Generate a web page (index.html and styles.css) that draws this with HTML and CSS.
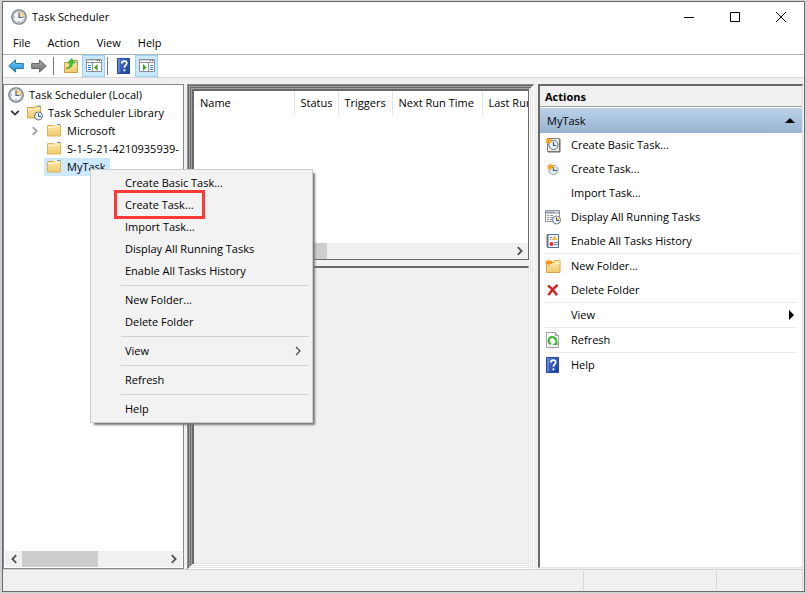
FILE: index.html
```html
<!DOCTYPE html>
<html lang="en">
<head>
<meta charset="utf-8">
<title>Task Scheduler</title>
<link rel="stylesheet" href="styles.css">
</head>
<body>
<svg class="defs" aria-hidden="true">
  <defs>
    <linearGradient id="gold" x1="0" y1="0" x2="0" y2="1"><stop offset="0" stop-color="#ffe9a6"/><stop offset="1" stop-color="#efca70"/></linearGradient>
    <linearGradient id="blue" x1="0" y1="0" x2="0" y2="1"><stop offset="0" stop-color="#7bd3fb"/><stop offset="1" stop-color="#168bd5"/></linearGradient>
    <linearGradient id="grey" x1="0" y1="0" x2="0" y2="1"><stop offset="0" stop-color="#aaa"/><stop offset="1" stop-color="#6f6f6f"/></linearGradient>
    <linearGradient id="navy" x1="0" y1="0" x2="1" y2="1"><stop offset="0" stop-color="#5279d0"/><stop offset="1" stop-color="#1c3c9e"/></linearGradient>
  </defs>
  <symbol id="clock" viewBox="0 0 16 16">
    <circle cx="8" cy="8" r="7.3" fill="#c9ccd0" stroke="#73777c" stroke-width="1.1"/>
    <circle cx="8" cy="8" r="5.7" fill="#f1f6fb" stroke="#a4a9af" stroke-width=".7"/>
    <path d="M8 8V2.4A5.6 5.6 0 0 1 13.6 8z" fill="#f6d78d"/>
    <path d="M8 3.5V8.5H11.5" fill="none" stroke="#4b6586" stroke-width="1.2"/>
    <path d="M3 8h1M8 12v1M12 8h1" stroke="#8c96a1"/>
  </symbol>
  <symbol id="folder" viewBox="0 0 16 16">
    <path d="M1.500 2.500h6l1-1h6v11.500h-13z" fill="url(#gold)" stroke="#dcb45c"/>
    <path d="M2 4.500h7l1-1h4" fill="none" stroke="#fff3c9"/>
    <path d="M8.500 1.500h3" stroke="#fff"/><path d="M11 1.500h3" stroke="#4d9ce3"/>
  </symbol>
  <symbol id="library" viewBox="0 0 16 16">
    <path d="M.5 2.500h7l1-1.500h5v12H.5z" fill="url(#gold)" stroke="#d5a647"/>
    <path d="M1 4.500h8l1-1h3" fill="none" stroke="#fff3c9"/>
    <path d="M10.500 1.500h3" stroke="#4d9ce3"/>
    <circle cx="11.500" cy="11" r="4" fill="#e7f2f8" stroke="#66717c"/>
    <path d="M11.500 8.500V11.500H14" fill="none" stroke="#345574"/>
  </symbol>
  <symbol id="back" viewBox="0 0 16 14"><path d="M.7 7 7.500 1v3.500h7.800v5H7.500V13z" fill="url(#blue)" stroke="#2a72a8"/></symbol>
  <symbol id="forward" viewBox="0 0 16 14"><path d="M15.300 7 8.500 1v3.500H.7v5h7.800V13z" fill="url(#grey)" stroke="#686868"/></symbol>
  <symbol id="up" viewBox="0 0 16 16">
    <path d="M1.500 4.500h7l1-2h5v12h-13z" fill="url(#gold)" stroke="#cf9f42"/>
    <path d="M12 4h2" stroke="#4d9ce3"/>
    <path d="M3 10C6 10 7 8 7 5H4.500L8.500.5 12 5H9.500C9.500 9 7 11 3 10z" fill="#42c32e" stroke="#2c9a25" stroke-width=".6"/>
  </symbol>
  <symbol id="panel-left" viewBox="0 0 16 14">
    <path d="M.5.5h15v12H.5z" fill="#fff" stroke="#8b9198"/><path d="M1 1.500h14" stroke="#cfd4da"/>
    <path d="M1 3.500h14" stroke="#8b9198"/><path d="M11 1.500h1M13 1.500h1" stroke="#555"/>
    <path d="M6.500 4v9" stroke="#8b9198"/><path d="M2 6.500h3M2 8.500h3M2 10.500h3" stroke="#397fbd"/>
    <path d="M11.500 5v7L8 8.500z" fill="#37a51d"/>
  </symbol>
  <symbol id="panel-right" viewBox="0 0 16 14">
    <path d="M.5.5h15v12H.5z" fill="#fff" stroke="#8b9198"/><path d="M1 1.500h14" stroke="#cfd4da"/>
    <path d="M1 3.500h14" stroke="#8b9198"/><path d="M11 1.500h1M13 1.500h1" stroke="#555"/>
    <path d="M9.500 4v9" stroke="#8b9198"/><path d="M11 6.500h3M11 8.500h3M11 10.500h3" stroke="#397fbd"/>
    <path d="M4 5v7l3.500-3.500z" fill="#37a51d"/>
  </symbol>
  <symbol id="help" viewBox="0 0 16 16">
    <path d="M1.500.5h12v15h-12z" fill="url(#navy)" stroke="#24479f"/><path d="M3 1v14" stroke="#7fa0e0"/>
    <path d="M5.800 5.500C5.800 2.200 11 2.300 10.800 5.300 10.700 7 8.400 7.200 8.400 9.700" fill="none" stroke="#fff" stroke-width="1.700"/><circle cx="8.400" cy="12.300" r="1.100" fill="#fff"/>
  </symbol>
  <symbol id="basic" viewBox="0 0 16 16">
    <path d="M2.500 1.500h12v13h-12z" fill="#ececec" stroke="#857c78"/><path d="M15 2v13H3" fill="none" stroke="#74665e"/>
    <circle cx="8.500" cy="8" r="4.600" fill="#e3f2fb" stroke="#67737e"/><path d="M8.500 5v3.500h2.800" fill="none" stroke="#355b7b" stroke-width="1.200"/>
    <path d="m3.500 0 1 2.300L7 2 5.400 4 7 6 4.500 5.500 3.500 8l-1-2.500L0 6l1.500-2L0 2l2.500.3z" fill="#f8a51d"/>
  </symbol>
  <symbol id="create" viewBox="0 0 16 16">
    <circle cx="8.500" cy="9" r="4.700" fill="#dcebf2" stroke="#a0a8ac"/><path d="M8.500 6v3.500H12" fill="none" stroke="#355b7b" stroke-width="1.200"/>
    <path d="m5.500 2 1 2.200 3-.7-1.600 2.200L9 8 6.500 7.200 5.500 9.500 4.300 7.300 2 8l1.200-2.300L2 3.700l2.500.6z" fill="#f8a01d"/>
  </symbol>
  <symbol id="running" viewBox="0 0 16 16">
    <path d="M.5 1.500h14v11H.5z" fill="#fff" stroke="#8c9298"/><path d="M1 3.500h13" stroke="#8799ab" stroke-width="2"/><path d="M10 3h3" stroke="#fff"/>
    <path d="M2 6.500h2M5 6.500h3M2 8.500h2M5 8.500h3M2 10.500h2M5 10.500h2" stroke="#8399b2"/>
    <circle cx="11.500" cy="11" r="4" fill="#e7f2f8" stroke="#737b84"/><path d="M11.500 7.500V11H15A3.500 3.500 0 0 0 11.500 7.500" fill="#f6d78d"/><path d="M11.500 8.500V11.500H14" fill="none" stroke="#345574"/>
  </symbol>
  <symbol id="history" viewBox="0 0 16 16">
    <path d="M2.500 1.500h11v13h-11z" fill="#f4f7fb" stroke="#4d71a6"/>
    <path d="M1 3h3M1 5h3M1 7h3M1 9h3M1 11h3M1 13h3" stroke="#777"/>
    <path d="M9.500 2.500 12.500 7h-6z" fill="#f2bd34"/><circle cx="6.500" cy="11" r="2" fill="#d8342c"/><path d="M5 4.500h2M5 6.500h1M9 9.500h4M9 11.500h4" stroke="#5f86ba"/>
  </symbol>
  <symbol id="new-folder" viewBox="0 0 16 16">
    <path d="M1.500 4.500h7l1-2h5.500v12H1.500z" fill="url(#gold)" stroke="#d5a647"/><path d="M11 3.500h4" stroke="#fff7cf"/><path d="M2 6.500h8l1-1h4" fill="none" stroke="#fff3c9"/>
    <path d="m4 1 1 2 3-.5L6.300 4.500 8 6.500 5 6 4 8.500 3 6 0 6.500l1.500-2L0 2.500 3 3z" fill="#f79718"/>
  </symbol>
  <symbol id="delete" viewBox="0 0 16 16"><path d="M3 3.500C6 5.500 9 9 12 13.200M12.500 3C9 5.500 6 9 3.500 13.200" fill="none" stroke="#d12222" stroke-width="2.500"/></symbol>
  <symbol id="refresh" viewBox="0 0 16 16">
    <path d="M1.500.5h9l3 3v12h-12z" fill="#fafafa" stroke="#a1a1a1"/><path d="M10.500.5v3h3" fill="#ddd" stroke="#a1a1a1"/>
    <path d="M6 12A3.600 3.600 0 1 1 10.800 9.500" fill="none" stroke="#38b52c" stroke-width="2"/><path d="M12.500 8.500v4.500H7.500z" fill="#38b52c"/>
  </symbol>
  <symbol id="chev-right" viewBox="0 0 8 10"><path d="m1.800 1.200 3.800 3.800-3.800 3.800" fill="none" stroke="currentColor" stroke-width="1.800"/></symbol>
  <symbol id="chev-thin" viewBox="0 0 8 10"><path d="m2 1 4 4-4 4" fill="none" stroke="currentColor" stroke-width="1.200"/></symbol>
  <symbol id="chev-left" viewBox="0 0 8 10"><path d="M6.200 1.200 2.400 5l3.800 3.800" fill="none" stroke="currentColor" stroke-width="1.800"/></symbol>
  <symbol id="chev-down" viewBox="0 0 10 8"><path d="m1.200 1.800 3.800 3.800 3.800-3.800" fill="none" stroke="currentColor" stroke-width="1.800"/></symbol>
</svg>

<div class="window">
  <header class="titlebar">
    <svg class="icon"><use href="#clock"/></svg>
    <h1>Task Scheduler</h1>
    <div class="controls">
      <button aria-label="Minimize"><svg viewBox="0 0 10 10"><path d="M0 5.500h10"/></svg></button>
      <button aria-label="Maximize"><svg viewBox="0 0 10 10"><path d="M.5.5h9v9h-9z"/></svg></button>
      <button aria-label="Close"><svg viewBox="0 0 10 10"><path d="m0 0 10 10M10 0 0 10"/></svg></button>
    </div>
  </header>
  <nav class="menubar">
    <button>File</button><button>Action</button><button>View</button><button>Help</button>
  </nav>
  <div class="toolbar">
    <button aria-label="Back"><svg class="arrow"><use href="#back"/></svg></button>
    <button aria-label="Forward"><svg class="arrow"><use href="#forward"/></svg></button>
    <span class="divider"></span>
    <button aria-label="Up one level"><svg class="icon"><use href="#up"/></svg></button>
    <button class="on" aria-label="Show console tree"><svg class="arrow"><use href="#panel-left"/></svg></button>
    <span class="divider tight"></span>
    <button aria-label="Help"><svg class="icon"><use href="#help"/></svg></button>
    <button class="on" aria-label="Show action pane"><svg class="arrow"><use href="#panel-right"/></svg></button>
  </div>

  <main class="panes">
    <section class="tree">
      <ul>
        <li class="root"><svg class="icon"><use href="#clock"/></svg><span>Task Scheduler (Local)</span></li>
        <li class="library"><svg class="twist open"><use href="#chev-down"/></svg><svg class="icon"><use href="#library"/></svg><span>Task Scheduler Library</span></li>
        <li class="child"><svg class="twist"><use href="#chev-right"/></svg><svg class="icon"><use href="#folder"/></svg><span>Microsoft</span></li>
        <li class="child"><i class="twist"></i><svg class="icon"><use href="#folder"/></svg><span>S-1-5-21-4210935939-</span></li>
        <li class="child"><i class="twist"></i><div class="selected"><svg class="icon"><use href="#folder"/></svg><span>MyTask</span></div></li>
      </ul>
      <div class="scrollbar">
        <button aria-label="Scroll left"><svg><use href="#chev-left"/></svg></button>
        <span class="thumb"></span>
        <button aria-label="Scroll right"><svg><use href="#chev-right"/></svg></button>
      </div>
    </section>

    <section class="results">
      <div class="list">
        <table>
          <thead><tr><th class="name">Name</th><th class="status">Status</th><th class="triggers">Triggers</th><th class="next">Next Run Time</th><th class="last">Last Run</th></tr></thead>
        </table>
        <div class="scrollbar">
          <button aria-label="Scroll left"><svg><use href="#chev-left"/></svg></button>
          <span class="thumb wide"></span>
          <button aria-label="Scroll right"><svg><use href="#chev-right"/></svg></button>
        </div>
      </div>
      <div class="details"></div>
    </section>

    <aside class="actions">
      <h2>Actions</h2>
      <button class="group">MyTask<svg viewBox="0 0 10 5"><path d="M5 0l5 5H0z"/></svg></button>
      <ul>
        <li><button><svg class="icon"><use href="#basic"/></svg>Create Basic Task...</button></li>
        <li><button><svg class="icon"><use href="#create"/></svg>Create Task...</button></li>
        <li><button><i class="icon"></i>Import Task...</button></li>
        <li><button><svg class="icon"><use href="#running"/></svg>Display All Running Tasks</button></li>
        <li><button><svg class="icon"><use href="#history"/></svg>Enable All Tasks History</button></li>
        <li class="ruled"><button><svg class="icon"><use href="#new-folder"/></svg>New Folder...</button></li>
        <li><button><svg class="icon"><use href="#delete"/></svg>Delete Folder</button></li>
        <li class="ruled"><button><i class="icon"></i>View<svg class="more" viewBox="0 0 5 10"><path d="M0 0l5 5-5 5z"/></svg></button></li>
        <li class="ruled"><button><svg class="icon"><use href="#refresh"/></svg>Refresh</button></li>
        <li class="ruled"><button><svg class="icon"><use href="#help"/></svg>Help</button></li>
      </ul>
    </aside>
  </main>
  <footer class="statusbar"><span></span><span></span><span></span></footer>
</div>

<div class="context">
  <button>Create Basic Task...</button>
  <button class="marked">Create Task...</button>
  <button>Import Task...</button>
  <button>Display All Running Tasks</button>
  <button>Enable All Tasks History</button>
  <hr>
  <button>New Folder...</button>
  <button>Delete Folder</button>
  <hr>
  <button>View<svg><use href="#chev-thin"/></svg></button>
  <hr>
  <button>Refresh</button>
  <hr>
  <button>Help</button>
</div>
</body>
</html>
```
FILE: styles.css
```css
*, *::after { box-sizing: border-box; }
body {
  margin: 0;
  height: 100vh;
  padding: 1px 2px 2px;
  background: #d2d2d2;
  color: #000;
  font: 11px/18px "Open Sans", "Noto Sans", sans-serif;
  position: relative;
  overflow: hidden;
}
button { border: 0; padding: 0; background: none; font: inherit; color: inherit; }
ul { list-style: none; margin: 0; padding: 0; }
svg { display: block; flex: none; }
.defs { position: absolute; width: 0; height: 0; }
.icon { width: 16px; height: 16px; flex: none; }

.window {
  height: 100%;
  display: flex;
  flex-direction: column;
  border: 1px solid #6b6b6b;
  background: #f0f0f0;
}
.titlebar { display: flex; align-items: center; height: 29px; padding-left: 8px; gap: 5px; background: #fff; }
h1 { margin: 0; flex: 1; font-size: 11px; font-weight: 400; }
.controls { display: flex; }
.controls button { width: 46px; height: 28px; display: flex; align-items: center; justify-content: center; }
.controls svg { width: 10px; height: 10px; fill: none; stroke: #000; }
.menubar { display: flex; gap: 17px; height: 24px; padding-left: 10px; background: #fff; border-bottom: 1px solid #b5b5b5; }
.toolbar { display: flex; align-items: center; height: 23px; padding-left: 1px; background: #fff; border-bottom: 1px solid #dadada; }
.toolbar button { width: 23px; height: 22px; display: flex; align-items: center; justify-content: center; }
.toolbar .on { background: #cce8ff; border: 1px solid #99d1ff; }
.arrow { width: 16px; height: 14px; }
.divider { width: 1px; height: 18px; margin: 0 5px 0 3px; background: #777; }
.divider.tight { margin: 0 4px 0 2px; }

.panes { flex: 1; min-height: 0; display: flex; padding: 6px 0 0; }
.tree { width: 181px; flex: none; display: flex; flex-direction: column; border: 1px solid #828790; background: #fff; margin-right: 3px; padding: 1px; overflow: hidden; }
.tree ul { flex: 1; }
.tree li { display: flex; align-items: center; height: 18px; padding-left: 3px; white-space: nowrap; }
.tree li span { margin-left: 5px; }
.tree .library { padding-left: 5px; }
.tree .child { padding-left: 26px; }
.twist { width: 8px; height: 10px; flex: none; margin-right: 7px; color: #a0a0a0; }
.twist.open { width: 10px; height: 8px; color: #333; }
.selected { display: flex; align-items: center; height: 18px; padding-right: 4px; margin-left: -2px; padding-left: 2px; background: #cce8ff; }

.scrollbar { display: flex; height: 16px; background: #f0f0f0; color: #505050; }
.scrollbar button { width: 17px; display: flex; align-items: center; justify-content: center; }
.scrollbar button:last-child { margin-left: auto; }
.scrollbar svg { width: 8px; height: 10px; }
.thumb { width: 76px; background: #cdcdcd; }
.thumb.wide { width: 116px; }

.results {
  flex: 1;
  min-width: 0;
  display: flex;
  flex-direction: column;
  padding: 7px 5px 5px 7px;
  box-shadow:
    inset 1px 1px #8c8c8c, inset -1px -1px #fff,
    inset 2px 2px #696969, inset -2px -2px #e3e3e3,
    inset 3px 3px #a0a0a0, inset -3px -3px #fff,
    inset 4px 4px #696969, inset -4px -4px #e3e3e3,
    inset 5px 5px #a0a0a0, inset -5px -5px #fff,
    inset 7px 7px #696969;
}
.list { height: 169px; display: flex; flex-direction: column; justify-content: space-between; background: #fff; border-right: 1px solid #696969; border-bottom: 1px solid #696969; overflow: hidden; margin-bottom: 6px; }
.details { flex: 1; border-top: 2px solid #696969; border-right: 1px solid #e3e3e3; border-bottom: 1px solid #e3e3e3; }
table { table-layout: fixed; width: 100%; border-collapse: collapse; }
th { height: 24px; padding: 0 0 0 6px; border-right: 1px solid #e5e5e5; text-align: left; font-weight: 400; white-space: nowrap; overflow: hidden; }
.name { width: 100px; }
.status { width: 44px; }
.triggers { width: 54px; }
.next { width: 90px; }
.last { border-right: 0; }

.actions { width: 265px; flex: none; margin: 0 1px 1px 4px; background: #fff; border: 2px solid #696969; border-right: 1px solid #e3e3e3; border-bottom: 1px solid #e3e3e3; }
h2 { margin: 0 0 1px; padding: 1px 5px 0; height: 21px; font-size: 11px; line-height: 20px; font-weight: 700; background: #f0f0f0; border-bottom: 1px solid #a0a0a0; }
.group { width: 100%; height: 25px; display: flex; align-items: center; justify-content: space-between; padding: 0 7px; background: linear-gradient(#b9d1ea, #99b4d1); }
.group svg { width: 10px; height: 5px; }
.actions li button { width: 100%; height: 24px; display: flex; align-items: center; gap: 10px; padding: 0 8px 0 5px; }
.ruled { background: linear-gradient(#ebebeb, #ebebeb) 5px 0 / calc(100% - 10px) 1px no-repeat; padding-top: 1px; }
.more { width: 5px; height: 10px; margin-left: auto; }

.statusbar { display: flex; height: 22px; padding: 1px 1px 1px 0; border-top: 1px solid #d0d0d0; }
.statusbar span { width: 133px; border-right: 1px solid #d7d7d7; }
.statusbar span:first-child { flex: 1; }
.statusbar span:last-child { width: 86px; }

.context { position: absolute; left: 90px; top: 169px; width: 223px; padding: 2px; background: #f2f2f2; border: 1px solid #ccc; box-shadow: 3px 3px 2px -1px #777; }
.context button { width: 100%; height: 22px; display: flex; align-items: center; justify-content: space-between; padding: 0 8px 0 32px; position: relative; }
.context svg { width: 8px; height: 10px; color: #444; }
.context hr { height: 1px; margin: 3px 1px 3px 28px; border: 0; background: #d0d0d0; }
.marked { z-index: 1; }
.marked::after { content: ""; position: absolute; left: 21px; top: -4px; width: 91px; height: 29px; border: 3px solid #f93a37; }
```
